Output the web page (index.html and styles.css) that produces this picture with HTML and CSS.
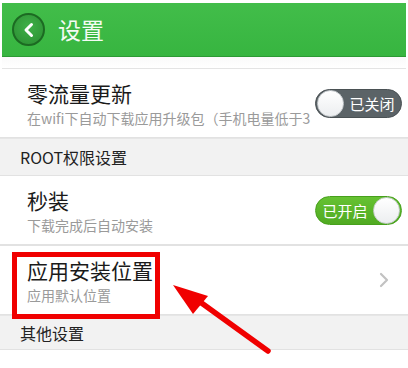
FILE: index.html
```html
<!DOCTYPE html>
<html lang="zh-CN">
<head>
    <meta charset="UTF-8">
    <meta name="viewport" content="width=device-width, initial-scale=1.0">
    <title>设置</title>
    <link rel="stylesheet" href="styles.css">
</head>
<body>
    <div class="screen">
        <header class="topbar">
            <div class="back-btn">
                <svg width="14" height="16" viewBox="0 0 14 16"><path d="M9.5 2.5 L4 8 L9.5 13.5" fill="none" stroke="#fff" stroke-width="3" stroke-linecap="round" stroke-linejoin="round"/></svg>
            </div>
            <h1>设置</h1>
        </header>
        <div class="subbar"></div>

        <div class="row">
            <div class="row-text">
                <div class="row-title">零流量更新</div>
                <div class="row-sub">在wifi下自动下载应用升级包（手机电量低于3</div>
            </div>
            <div class="switch off">
                <span class="knob"></span>
                <span class="switch-label">已关闭</span>
            </div>
        </div>

        <div class="section">ROOT权限设置</div>

        <div class="row">
            <div class="row-text">
                <div class="row-title">秒装</div>
                <div class="row-sub">下载完成后自动安装</div>
            </div>
            <div class="switch on">
                <span class="switch-label">已开启</span>
                <span class="knob"></span>
            </div>
        </div>

        <div class="row">
            <div class="row-text">
                <div class="row-title">应用安装位置</div>
                <div class="row-sub">应用默认位置</div>
            </div>
            <svg class="chevron" width="10" height="16" viewBox="0 0 10 16"><path d="M2 2 L8 8 L2 14" fill="none" stroke="#c2c2c2" stroke-width="2.2" stroke-linecap="round" stroke-linejoin="round"/></svg>
        </div>

        <div class="section section-small">其他设置</div>

        <!-- annotation -->
        <div class="mark-box"></div>
        <svg class="mark-arrow" width="408" height="368" viewBox="0 0 408 368">
            <line x1="268" y1="351" x2="196" y2="299" stroke="#f00000" stroke-width="5.5" stroke-linecap="round"/>
            <polygon points="173,285 208,296 193,314" fill="#f00000"/>
        </svg>
    </div>
</body>
</html>
```

FILE: styles.css
```css
* {
    margin: 0;
    padding: 0;
    box-sizing: border-box;
}

body {
    font-family: "Noto Sans CJK SC", "Noto Sans", sans-serif;
    background: #fff;
    color: #222;
}

.screen {
    position: relative;
    width: 408px;
    height: 368px;
    overflow: hidden;
    padding-top: 3px;
}

.topbar {
    height: 54px;
    margin: 0 2px;
    display: flex;
    align-items: center;
    gap: 13px;
    padding-left: 10px;
    background: linear-gradient(#42bd4a, #37b540);
    border-bottom: 1px solid #2c9a34;
}

.back-btn {
    width: 33px;
    height: 33px;
    border-radius: 50%;
    border: 2px solid #1c6a22;
    background: radial-gradient(circle at 50% 40%, #3fb048, #2a8d31);
    display: flex;
    align-items: center;
    justify-content: center;
}

.topbar h1 {
    font-size: 23px;
    font-weight: 400;
    color: #f4fbf4;
    line-height: 1.3;
}

.subbar {
    height: 12px;
    margin: 0 2px;
    border-bottom: 1px solid #e4e4e4;
    background: linear-gradient(#fafafa, #fff);
}

.row {
    height: 70px;
    display: flex;
    align-items: center;
    justify-content: space-between;
    padding: 0 6px 0 27px;
    border-bottom: 2px solid #e2e2e2;
}

.row-text {
    display: flex;
    flex-direction: column;
    gap: 2px;
    white-space: nowrap;
    flex: 1;
    min-width: 0;
}

.row-title {
    font-size: 21px;
    line-height: 28px;
    color: #1a1a1a;
}

.row-sub {
    font-size: 14px;
    line-height: 19px;
    color: #9a9a9a;
    max-width: 284px;
    overflow: hidden;
}

.switch {
    width: 87px;
    height: 29px;
    border-radius: 15px;
    display: flex;
    align-items: center;
    padding: 0 1px;
    flex-shrink: 0;
}

.switch.off {
    background: #5b6367;
    border: 1px solid #4a5154;
}

.switch.on {
    background: linear-gradient(#66c232, #50aa22);
    border: 1px solid #47a01c;
}

.knob {
    width: 27px;
    height: 27px;
    border-radius: 50%;
    background: linear-gradient(#ffffff, #eceef0);
    border: 1px solid #c9cdd0;
    flex-shrink: 0;
}

.switch-label {
    flex: 1;
    text-align: center;
    color: #fff;
    font-size: 15px;
    line-height: 27px;
}

.chevron {
    margin-right: 13px;
    flex-shrink: 0;
}

.section {
    height: 38px;
    display: flex;
    align-items: center;
    padding-left: 20px;
    font-size: 16px;
    line-height: 22px;
    color: #222;
    background: #f2f2f2;
    border-bottom: 1px solid #e2e2e2;
    margin-top: -1px;
    border-top: 1px solid #e6e6e6;
}

.section-small {
    height: 35px;
}

.mark-box {
    position: absolute;
    left: 12px;
    top: 252px;
    width: 148px;
    height: 67px;
    border: 5px solid #f00000;
}

.mark-arrow {
    position: absolute;
    left: 0;
    top: 0;
    pointer-events: none;
}
```
